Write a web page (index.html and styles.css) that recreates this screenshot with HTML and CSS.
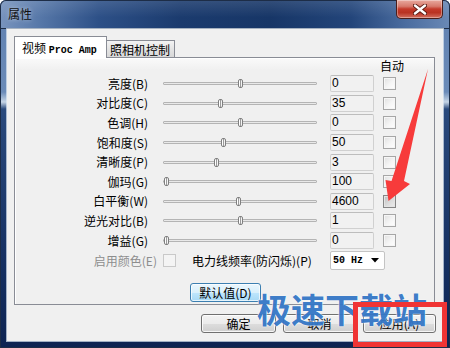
FILE: index.html
```html
<!DOCTYPE html>
<html lang="zh">
<head>
<meta charset="utf-8">
<title>属性</title>
<link rel="stylesheet" href="styles.css">
</head>
<body>
<div class="window">
  <div class="titlebar">
    <span class="title">属性</span>
    <div class="close">
      <svg width="14" height="11" viewBox="0 0 14 11">
        <path d="M2 1.5 L12 9.5 M12 1.5 L2 9.5" stroke="#5a1a12" stroke-width="4.2" stroke-linecap="round"/>
        <path d="M2 1.5 L12 9.5 M12 1.5 L2 9.5" stroke="#ffffff" stroke-width="2.4" stroke-linecap="round"/>
      </svg>
    </div>
  </div>
  <div class="client">
    <div class="tabs">
      <div class="tab active">视频 <span class="mono">Proc Amp</span></div>
      <div class="tab">照相机控制</div>
    </div>
    <div class="pane">
      <div class="head"><span>自动</span></div>
      <div class="row"><span class="label">亮度(B)</span><div class="slider"><i class="thumb" style="left:50%"></i></div><div class="num">0</div><span class="chk"></span></div>
      <div class="row"><span class="label">对比度(C)</span><div class="slider"><i class="thumb" style="left:37%"></i></div><div class="num">35</div><span class="chk"></span></div>
      <div class="row"><span class="label">色调(H)</span><div class="slider"><i class="thumb" style="left:50%"></i></div><div class="num">0</div><span class="chk"></span></div>
      <div class="row"><span class="label">饱和度(S)</span><div class="slider"><i class="thumb" style="left:39%"></i></div><div class="num">50</div><span class="chk"></span></div>
      <div class="row"><span class="label">清晰度(P)</span><div class="slider"><i class="thumb" style="left:34%"></i></div><div class="num">3</div><span class="chk"></span></div>
      <div class="row"><span class="label">伽玛(G)</span><div class="slider"><i class="thumb" style="left:1%"></i></div><div class="num">100</div><span class="chk"></span></div>
      <div class="row"><span class="label">白平衡(W)</span><div class="slider"><i class="thumb" style="left:49%"></i></div><div class="num">4600</div><span class="chk hot"></span></div>
      <div class="row"><span class="label">逆光对比(B)</span><div class="slider"><i class="thumb" style="left:50%"></i></div><div class="num">1</div><span class="chk"></span></div>
      <div class="row"><span class="label">增益(G)</span><div class="slider"><i class="thumb" style="left:1%"></i></div><div class="num">0</div><span class="chk"></span></div>
      <div class="opts">
        <span class="label2 dis">启用颜色(E)</span>
        <span class="chk dischk"></span>
        <span class="freq">电力线频率(防闪烁)(P)</span>
        <div class="combo"><span class="mono">50 Hz</span>
          <svg width="8" height="5" viewBox="0 0 8 5"><path d="M0 0 H8 L4 4.5 Z" fill="#000"/></svg>
        </div>
      </div>
      <div class="defrow"><button class="btn def">默认值(D)</button></div>
    </div>
    <div class="actions">
      <button class="btn ok">确定</button>
      <button class="btn">取消</button>
      <button class="btn">应用(A)</button>
    </div>
  </div>
  <div class="watermark">极速下载站</div>
  <div class="redbox"></div>
  <svg class="arrow" width="450" height="348" viewBox="0 0 450 348">
    <path d="M428 69 L404 181 L410 184 L388.5 201 L385.5 180 L391.5 181 Z" fill="#f73b3b"/>
  </svg>
</div>
</body>
</html>
```
FILE: styles.css
```css
html, body {
  margin: 0;
  padding: 0;
  background: #ffffff;
}
body {
  width: 450px;
  height: 348px;
  overflow: hidden;
  font-family: "Noto Sans CJK SC", "Liberation Sans", sans-serif;
  font-size: 12px;
  color: #000;
}
.window {
  position: relative;
  width: 450px;
  height: 348px;
  box-sizing: border-box;
  padding: 0 7px 7px;
  border-radius: 6px 6px 0 0;
  background: linear-gradient(to bottom, #5f80b0 0px, #6b8bb8 92px, #c6d5e6 102px, #2a4a7d 109px, #173264 250px, #0e2452 348px);
  box-shadow: inset 0 0 0 1px #1d2d47;
}
.titlebar {
  margin: 0 -7px;
  height: 29px;
  padding: 0 7px 0 8px;
  display: flex;
  justify-content: space-between;
  align-items: flex-start;
  border-radius: 6px 6px 0 0;
  background:
    linear-gradient(to bottom, rgba(255,255,255,0.12), rgba(255,255,255,0) 60%),
    linear-gradient(90deg, #7894be 0%, #5677a8 9%, #2d5087 22%, #1b3b6e 40%, #173667 60%, #23457a 78%, #4a6c9f 90%, #6a89b6 100%);
  box-shadow: inset 0 0 0 1px #1d2d47;
}
.title {
  margin-top: 6px;
  font-size: 12px;
  line-height: 16px;
  color: #101010;
  text-shadow: 0 0 4px rgba(255,255,255,0.6);
}
.close {
  width: 47px;
  height: 19px;
  box-sizing: border-box;
  display: flex;
  align-items: center;
  justify-content: center;
  border: 1px solid #4b1e1a;
  border-top: none;
  border-radius: 0 0 5px 5px;
  background: linear-gradient(to bottom, #e9a99e 0%, #d77a6c 35%, #c43a2a 50%, #b93222 70%, #d2705f 100%);
  box-shadow: inset 0 0 0 1px rgba(255,255,255,0.35);
}
.client {
  height: 312px;
  box-sizing: border-box;
  padding: 7px 7px 0 7px;
  background: #f0f0f0;
  box-shadow: 0 0 0 1px rgba(225,235,245,0.7);
}
.tabs {
  display: flex;
  align-items: flex-end;
  height: 21px;
  position: relative;
  z-index: 2;
}
.tab {
  box-sizing: border-box;
  border: 1px solid #898c95;
  border-bottom: none;
  font-size: 12px;
  line-height: 15px;
  white-space: nowrap;
}
.tab.active {
  width: 93px;
  height: 22px;
  margin-bottom: -1px;
  padding: 3px 0 0 7px;
  background: #ffffff;
}
.tab:not(.active) {
  width: 69px;
  height: 17px;
  margin-left: -1px;
  padding: 1px 0 0 3px;
  background: linear-gradient(to bottom, #f3f3f3, #e4e4e4 50%, #d8d8d8);
}
.mono {
  font-family: "Liberation Mono", "DejaVu Sans Mono", monospace;
  font-size: 10px;
  font-weight: bold;
}
.pane {
  width: 421px;
  height: 248px;
  box-sizing: border-box;
  border: 1px solid #898c95;
  background: linear-gradient(to bottom, #fafafa, #f0f0f0 12px);
  box-shadow: inset 1px 1px 0 #ffffff;
}
.head {
  height: 16px;
  padding-left: 365px;
  line-height: 16px;
  font-size: 12px;
}
.row {
  display: flex;
  align-items: center;
  height: 19.6px;
}
.label {
  width: 133px;
  text-align: right;
  white-space: nowrap;
  line-height: 14px;
}
.slider {
  position: relative;
  margin-left: 15px;
  width: 154px;
  height: 3px;
  box-sizing: border-box;
  border: 1px solid #b4b4b4;
  border-radius: 1px;
  background: #e9e9e9;
}
.thumb {
  position: absolute;
  top: -4px;
  width: 5px;
  height: 9px;
  margin-left: -2px;
  box-sizing: border-box;
  border: 1px solid #7f7f7f;
  border-radius: 2px;
  background: linear-gradient(90deg, #ffffff 0, #ffffff 40%, #9a9a9a 41%, #9a9a9a 60%, #f4f4f4 61%);
}
.num {
  margin-left: 13px;
  width: 44px;
  height: 17px;
  box-sizing: border-box;
  padding-left: 1px;
  border: 1px solid #d0d0d0;
  border-top-color: #bdbdbd;
  border-radius: 2px;
  background: #f1f1f1;
  font-family: "Liberation Sans", sans-serif;
  font-size: 12px;
  line-height: 15px;
}
.chk {
  display: block;
  margin-left: 9px;
  width: 13px;
  height: 13px;
  box-sizing: border-box;
  border: 1px solid #a6a6a6;
  background: linear-gradient(135deg, #e0e0e0 0%, #f5f5f5 55%, #ffffff 100%);
  box-shadow: inset 0 0 0 1px #f6f6f6;
}
.chk.hot {
  border-color: #858585;
  background: linear-gradient(135deg, #bdbdbd 0%, #dcdcdc 55%, #ededed 100%);
  box-shadow: inset 0 0 0 1px #e4e4e4;
}
.opts {
  display: flex;
  align-items: center;
  height: 20px;
}
.label2 {
  width: 142px;
  text-align: right;
  white-space: nowrap;
}
.dis {
  color: #8d8d8d;
}
.chk.dischk {
  margin-left: 6px;
  border-color: #c9c9c9;
  background: #f4f4f4;
  box-shadow: none;
}
.freq {
  margin-left: 16px;
  width: 125px;
  white-space: nowrap;
}
.combo {
  margin-left: 13px;
  width: 55px;
  height: 19px;
  box-sizing: border-box;
  display: flex;
  align-items: center;
  justify-content: space-between;
  padding: 0 5px 0 2px;
  border: 1px solid #c4c4c4;
  border-radius: 2px;
  background: #ffffff;
}
.defrow {
  margin-top: 13px;
  padding-left: 175px;
}
.btn {
  display: block;
  margin: 0;
  height: 19px;
  padding: 0;
  box-sizing: border-box;
  border: 1px solid #707070;
  border-radius: 3px;
  font-family: "Noto Sans CJK SC", sans-serif;
  font-size: 12px;
  line-height: 15px;
  color: #000;
  background: linear-gradient(to bottom, #f3f3f3 0%, #ebebeb 50%, #dddddd 51%, #cfcfcf 100%);
  box-shadow: inset 0 0 0 1px rgba(255,255,255,0.8);
}
.btn.def {
  width: 71px;
  height: 19px;
  border-color: #3c7fb1;
  background: linear-gradient(to bottom, #eaf6fd 0%, #d9f0fc 50%, #bee6fd 51%, #a7d9f5 100%);
  box-shadow: inset 0 0 0 1px rgba(255,255,255,0.7);
}
.actions {
  display: flex;
  justify-content: flex-end;
  gap: 7px;
  margin-top: 9px;
}
.actions .btn {
  width: 73px;
}
.actions .btn.ok {
  width: 75px;
}
.watermark {
  position: absolute;
  left: 257px;
  top: 290px;
  font-family: "Noto Sans CJK SC", sans-serif;
  font-weight: 700;
  font-size: 34px;
  line-height: 38px;
  color: #3577c6;
  white-space: nowrap;
  text-shadow: 0 0 2px #ffffff, 0 0 1px #ffffff;
  opacity: 0.95;
}
.redbox {
  position: absolute;
  left: 353px;
  top: 302px;
  width: 94px;
  height: 45px;
  box-sizing: border-box;
  border: 5px solid #f03434;
}
.arrow {
  position: absolute;
  left: 0;
  top: 0;
  pointer-events: none;
}
```
